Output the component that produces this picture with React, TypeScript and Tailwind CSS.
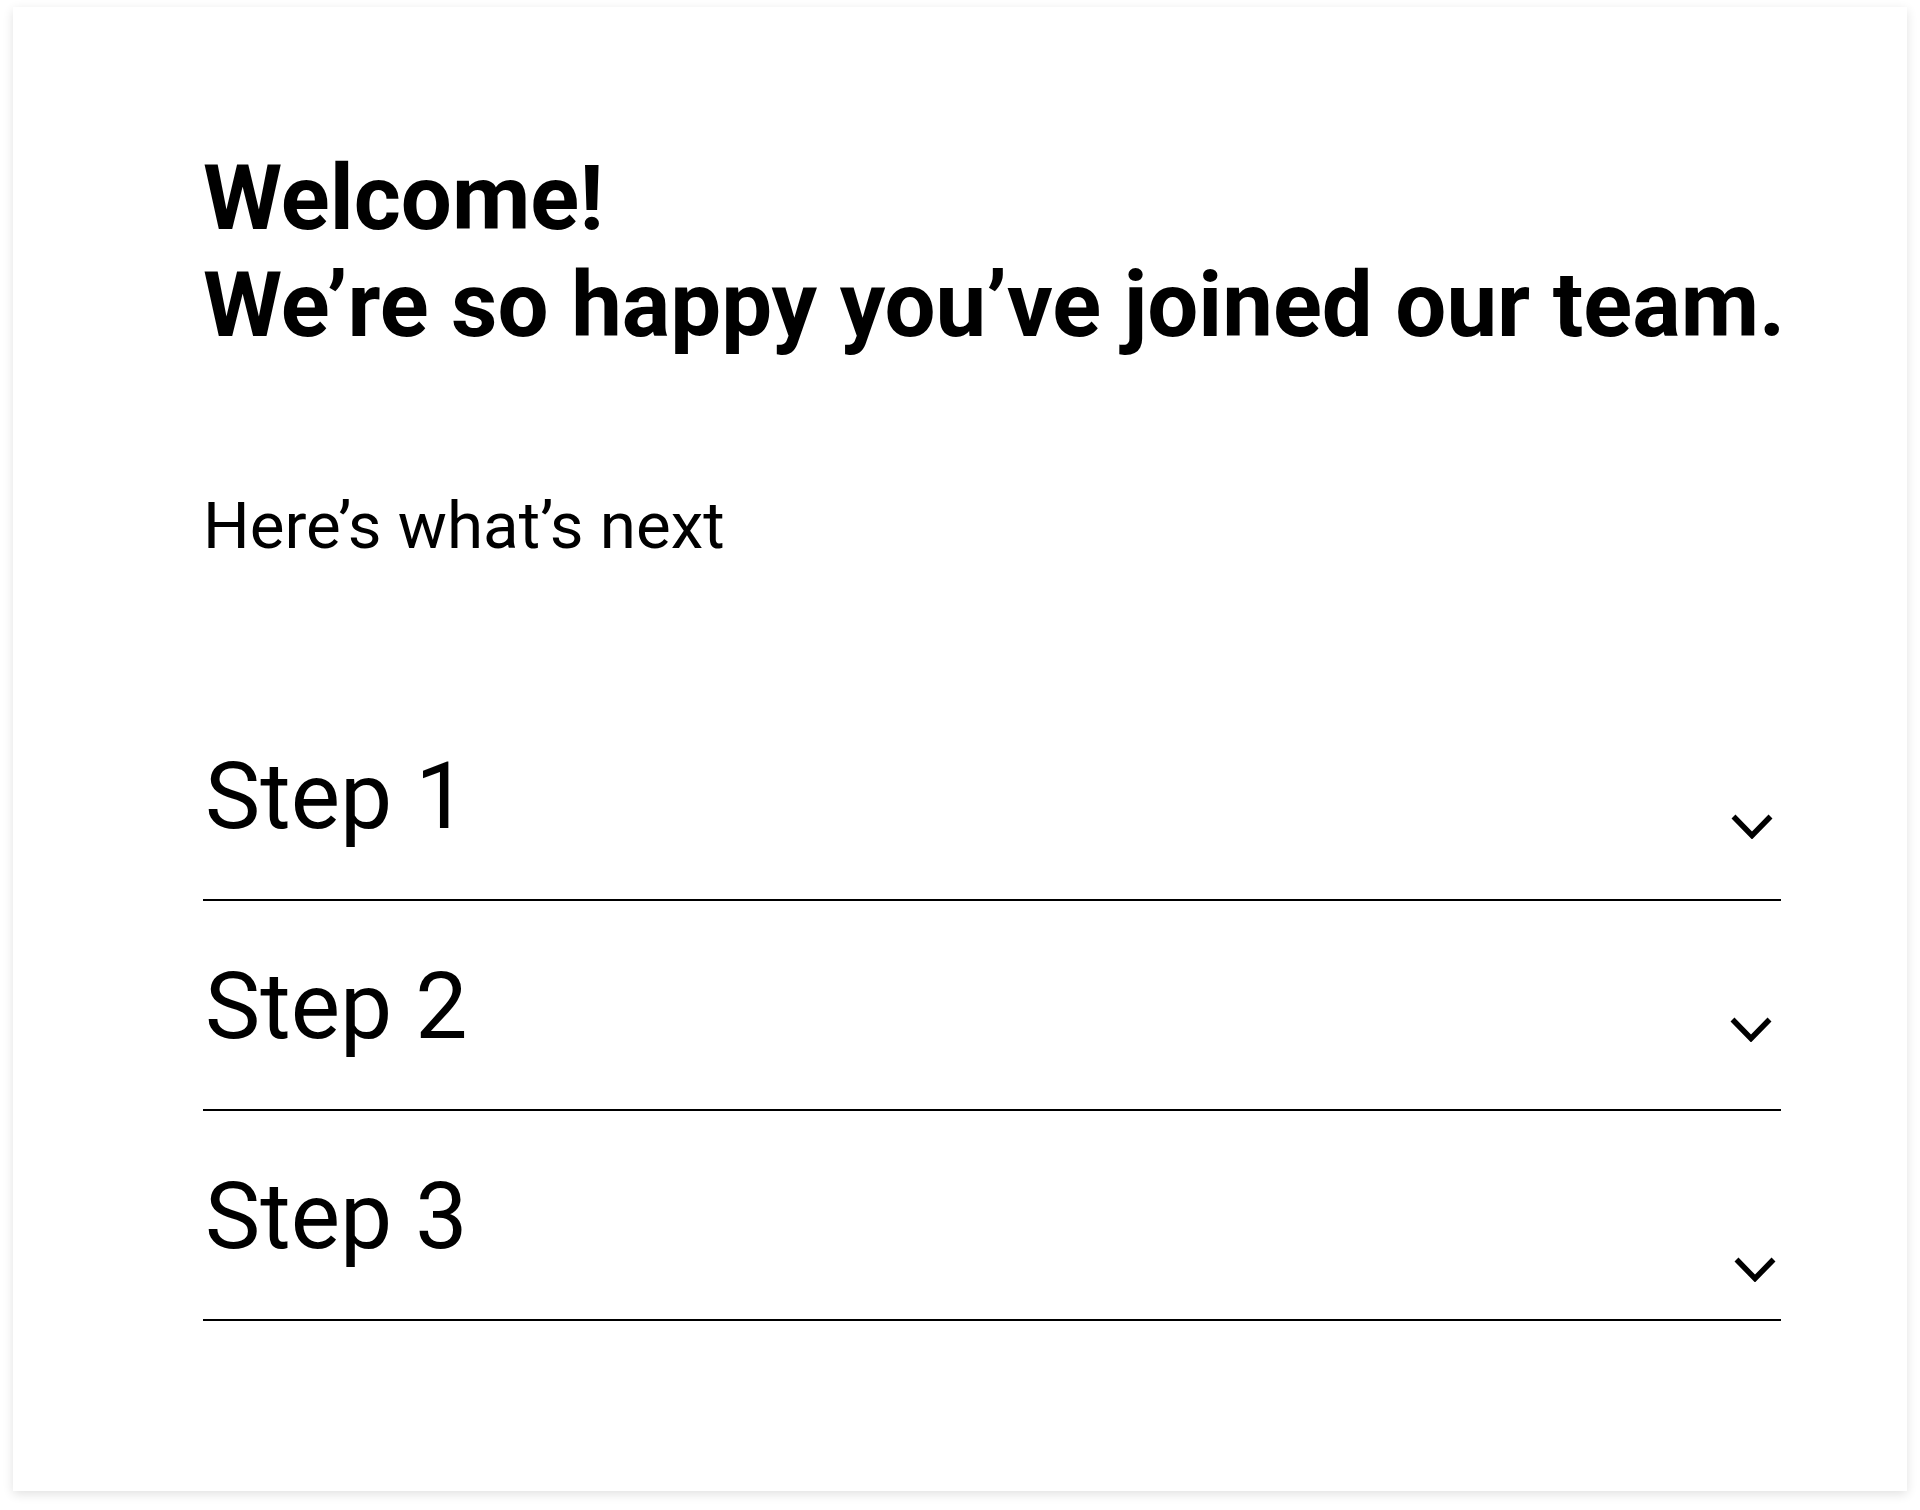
import React from "react";

const steps = [
  { label: "Step 1", chevron: "mb-[12px] mr-[8px]" },
  { label: "Step 2", chevron: "mb-[19px] mr-[9px]" },
  { label: "Step 3", chevron: "-mb-[11px] mr-[5px]" },
];

const Chevron: React.FC<{ className?: string }> = ({ className }) => (
  <svg
    className={className}
    width="42"
    height="25"
    viewBox="0 0 42 25"
    fill="none"
    stroke="#000"
    strokeWidth="5.5"
  >
    <polyline points="2.5,2.5 21,21.5 39.5,2.5" />
  </svg>
);

const App: React.FC = () => {
  return (
    <div
      className="min-h-[1510px] w-[1920px] bg-white pl-[13px] pt-[7px]"
      style={{ fontFamily: "Roboto, 'Liberation Sans', sans-serif" }}
    >
      <div className="w-[1894px] h-[1484px] bg-white shadow-[0_3px_10px_rgba(0,0,0,0.12)] pl-[190px] pr-[126px] pt-[138px]">
        {/* Heading */}
        <h1 className="text-[90.5px] leading-[107px] font-bold text-black whitespace-nowrap">
          Welcome!
          <br />
          We’re so happy you’ve joined our team.
        </h1>

        <p className="mt-[128px] text-[65.5px] leading-[77px] text-black">
          Here’s what’s next
        </p>

        {/* Steps */}
        <div className="mt-[127px]">
          {steps.map((step) => (
            <div
              key={step.label}
              className="flex items-end justify-between border-b-2 border-black pt-[51px] pb-[48px]"
            >
              <span className="ml-[2px] text-[93px] leading-[109px] text-black">
                {step.label}
              </span>
              <Chevron className={step.chevron} />
            </div>
          ))}
        </div>
      </div>
    </div>
  );
};

export default App;
